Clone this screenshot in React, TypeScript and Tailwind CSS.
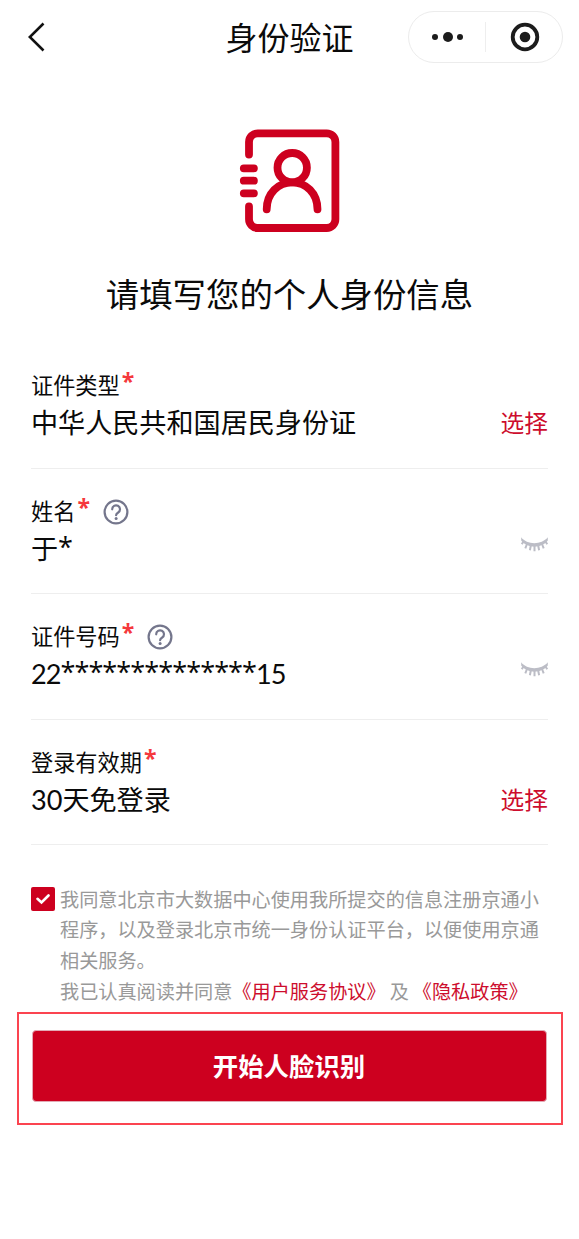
import { ReactNode } from 'react';

type Field = {
  label: string;
  value: ReactNode;
  help?: boolean;
  action: 'select' | 'hidden';
};

const fields: Field[] = [
  { label: '证件类型', value: '中华人民共和国居民身份证', action: 'select' },
  { label: '姓名', value: <>于<Stars count={1} /></>, help: true, action: 'hidden' },
  {
    label: '证件号码',
    value: <span className="tracking-[-1px]">22<Stars count={14} />15</span>,
    help: true,
    action: 'hidden',
  },
  { label: '登录有效期', value: '30天免登录', action: 'select' },
];

function Stars({ count }: { count: number }) {
  return <span className="align-[2px] font-['Open_Sans',sans-serif] leading-none tracking-[-0.95px]">{'*'.repeat(count)}</span>;
}

function BookIcon() {
  return (
    <svg width="102" height="104" viewBox="0 0 102 104" fill="none" stroke="#cd001f" strokeWidth="7.8" strokeLinecap="round">
      <path d="M10 25.500V13a8.700 8.700 0 0 1 8.700-8.700h69a8.700 8.700 0 0 1 8.700 8.700v77.300a8.700 8.700 0 0 1-8.700 8.700h-69a8.700 8.700 0 0 1-8.700-8.700V77.500" />
      <path d="M4.800 39.300h10.100M4.800 51.700h10.100M4.800 64.300h10.100" />
      <circle cx="53.2" cy="38.700" r="14.700" />
      <path d="M27.700 80.300C27.700 64 39.500 53.300 53.200 53.300S78.500 64 78.500 80.300" />
    </svg>
  );
}

function HelpIcon() {
  return (
    <svg width="26" height="26" viewBox="0 0 26 26" fill="none" stroke="#74768c" strokeWidth="2.2" strokeLinecap="round">
      <circle cx="13" cy="13" r="11.4" />
      <path d="M9.200 10.300a3.900 3.900 0 1 1 6 3.200c-1.400.9-2.100 1.500-2.100 2.700" />
      <circle cx="13.100" cy="19.400" r="1.500" fill="#74768c" stroke="none" />
    </svg>
  );
}

function ClosedEyeIcon() {
  return (
    <svg width="28" height="16" viewBox="0 0 28 16" fill="none" stroke="#bcbdc6">
      <path d="M1.200.3C7 8.200 21.500 8.200 27.800.3V3.500C21.500 11.700 7.500 11.700 1.200 3.500Z" fill="#bcbdc6" stroke="none" />
      <path d="M3.600 4.500 1.700 7.200M7 7 5.300 11.300M10.800 8.500l-.9 4.700M14.500 9v5.300M18.200 8.500l.9 4.700M22 7l1.700 4.300M25.400 4.500l1.900 2.700" strokeWidth="2" />
    </svg>
  );
}

function FieldRow({ label, value, help, action }: Field) {
  return (
    <div className="flex h-[125.5px] justify-between border-b border-[#eeeeee] pt-[23px]">
      <div className="whitespace-nowrap">
        <div className="flex h-[38px] items-center text-[22.2px]">
          {label}
          <span className="ml-[2px] w-[11px] pb-2 font-['Open_Sans',sans-serif] text-[23px] font-bold leading-[30px] text-[#f5383c]">*</span>
          {help && <span className="ml-[14.5px] pt-[2px]"><HelpIcon /></span>}
        </div>
        <div className="h-[37px] font-['Lato','Noto_Sans_CJK_SC',sans-serif] text-[27.1px] leading-[37px]">{value}</div>
      </div>
      {action === 'select' ? (
        <button className="mt-[38px] h-[37px] text-[23.7px] leading-[37px] text-[#cd0d2d]">选择</button>
      ) : (
        <button className="mt-[45px] h-4"><ClosedEyeIcon /></button>
      )}
    </div>
  );
}

export default function App() {
  return (
    <div className="flex h-[1239px] w-[579px] flex-col bg-white font-['Noto_Sans_CJK_SC',sans-serif] text-[#0a0a0a]">
      <header className="grid h-[74px] grid-cols-[1fr_auto_1fr] items-center px-4">
        <svg className="ml-3" width="18" height="30" viewBox="0 0 18 30" fill="none" stroke="#111111" strokeWidth="2.600">
          <path d="M15.500 1.500 1.800 15l13.700 13.500" />
        </svg>
        <h1 className="pb-px text-[32px] leading-[73px]">身份验证</h1>
        <div className="flex h-[52px] w-[155px] items-center justify-self-end rounded-full border border-[#ececec]">
          <div className="flex flex-1 items-center justify-center gap-[4.500px] pl-[2px]">
            <i className="size-[6px] rounded-full bg-[#1c1c1c]" />
            <i className="size-[10px] rounded-full bg-[#1c1c1c]" />
            <i className="size-[6px] rounded-full bg-[#1c1c1c]" />
          </div>
          <div className="h-[30px] w-px bg-[#eeeeee]" />
          <div className="flex flex-1 justify-center pl-[3px]">
            <svg width="30" height="30" viewBox="0 0 30 30">
              <circle cx="15" cy="15" r="12.300" fill="none" stroke="#1c1c1c" strokeWidth="3.800" />
              <circle cx="15" cy="15" r="5.300" fill="#1c1c1c" />
            </svg>
          </div>
        </div>
      </header>

      <div className="flex h-[269px] flex-col items-center pt-[55px]">
        <BookIcon />
        <h2 className="mt-[36px] text-[33.4px] leading-[48px]">请填写您的个人身份信息</h2>
      </div>

      <main className="px-[31px]">
        {fields.map((field) => (
          <FieldRow key={field.label} {...field} />
        ))}
      </main>

      <div className="mt-[38.5px] flex pl-[31px]">
        <div className="mt-[3.5px] flex size-6 items-center justify-center rounded-[2px] bg-[#cd001f]">
          <svg width="14" height="12" viewBox="0 0 14 12" fill="none" stroke="white" strokeWidth="2.600" strokeLinecap="round">
            <path d="m1.500 5.800 4 3.700 7-7" />
          </svg>
        </div>
        <div className="ml-[5px] whitespace-nowrap text-[19.16px] leading-[30.7px] text-[#999999]">
          <p>我同意北京市大数据中心使用我所提交的信息注册京通小</p>
          <p>程序，以及登录北京市统一身份认证平台，以便使用京通</p>
          <p>相关服务。</p>
          <p className="flex">
            我已认真阅读并同意
            <a className="text-[#cd0d2d]">《用户服务协议》</a>
            <span className="ml-[4px]">及</span>
            <a className="ml-[4px] text-[#cd0d2d]">《隐私政策》</a>
          </p>
        </div>
      </div>

      <div className="mx-auto mt-[6px] w-[546px] border-2 border-[#fb4450] pb-[21px] pl-[13px] pr-[14px] pt-4">
        <button className="h-[72px] w-full rounded-[4px] border border-[#e2aab5] bg-[#cd001f] pb-[2px] text-[25.4px] font-bold text-white">
          开始人脸识别
        </button>
      </div>
    </div>
  );
}
